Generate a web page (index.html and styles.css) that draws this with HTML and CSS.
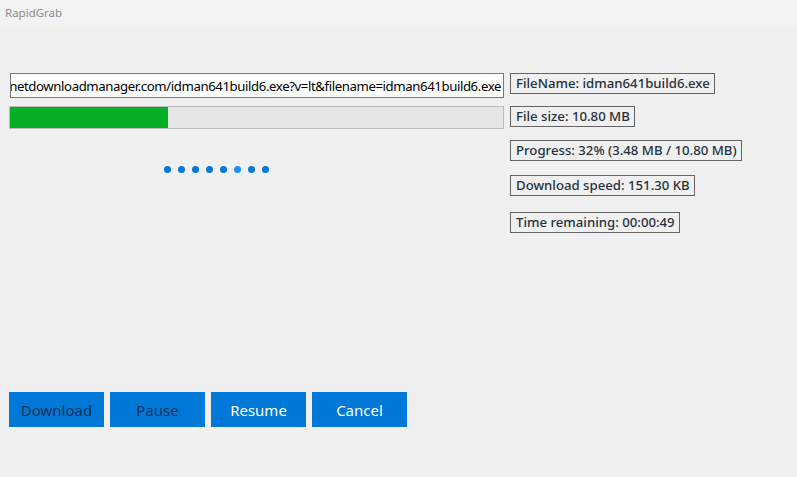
FILE: index.html
```html
<!DOCTYPE html>
<html>
<head>
<meta charset="utf-8">
<link rel="stylesheet" href="styles.css">
</head>
<body>
<div class="window">
  <div class="titlebar">RapidGrab</div>
  <div class="content">
    <div class="top">
      <div class="left">
        <div class="urlbox"><span class="url">netdownloadmanager.com/idman641build6.exe?v=lt&amp;filename=idman641build6.exe</span></div>
        <div class="progress"><div class="fill" style="width: 32%"></div></div>
        <div class="dots">
          <span class="dot"></span><span class="dot"></span><span class="dot"></span><span class="dot"></span><span class="dot"></span><span class="dot lit"></span><span class="dot"></span><span class="dot"></span>
        </div>
      </div>
      <div class="right">
        <div class="info">FileName: idman641build6.exe</div>
        <div class="info">File size: 10.80 MB</div>
        <div class="info">Progress: 32% (3.48 MB / 10.80 MB)</div>
        <div class="info">Download speed: 151.30 KB</div>
        <div class="info">Time remaining: 00:00:49</div>
      </div>
    </div>
    <div class="buttons">
      <button class="btn disabled">Download</button>
      <button class="btn disabled">Pause</button>
      <button class="btn">Resume</button>
      <button class="btn">Cancel</button>
    </div>
  </div>
</div>
</body>
</html>
```

FILE: styles.css
```css
html, body {
  margin: 0;
  padding: 0;
  background: #f0f0f0;
  font-family: "Noto Sans", "Open Sans", sans-serif;
}
.window {
  width: 797px;
  height: 477px;
  background: #f0f0f0;
  overflow: hidden;
}
.titlebar {
  height: 28px;
  background: #f3f3f3;
  color: #8a8a8a;
  font-size: 11.5px;
  line-height: 25px;
  padding-left: 5px;
}
.content {
  padding: 0 9px;
}
.top {
  display: flex;
  gap: 6px;
  height: 364px;
}
.left {
  width: 495px;
  display: flex;
  flex-direction: column;
}
.urlbox {
  margin: 45px 0 0 1px;
  box-sizing: border-box;
  width: 494px;
  height: 25px;
  background: #fff;
  border: 1px solid #7a7a7a;
  display: flex;
  justify-content: flex-end;
  align-items: center;
  overflow: hidden;
  padding-right: 2px;
}
.url {
  white-space: nowrap;
  font-size: 13.2px;
  letter-spacing: -0.4px;
  color: #000;
}
.progress {
  margin-top: 8px;
  box-sizing: border-box;
  height: 23px;
  background: #e6e6e6;
  border: 1px solid #bcbcbc;
}
.fill {
  height: 100%;
  background: #06b025;
}
.dots {
  margin: 37px 0 0 155px;
  display: flex;
  gap: 7px;
}
.dot {
  width: 7px;
  height: 7px;
  border-radius: 50%;
  background: #0078d7;
}
.dot.lit {
  background: #1e90ff;
}
.right {
  display: flex;
  flex-direction: column;
  align-items: flex-start;
  padding-top: 45px;
}
.info {
  box-sizing: border-box;
  height: 21px;
  border: 1px solid #646464;
  padding: 0 4px 0 5px;
  font-size: 13.2px;
  font-weight: 500;
  line-height: 19px;
  color: #26323c;
  white-space: nowrap;
}
.info:nth-child(2) { margin-top: 12px; }
.info:nth-child(3) { margin-top: 13px; }
.info:nth-child(4) { margin-top: 14px; }
.info:nth-child(5) { margin-top: 16px; }
.buttons {
  display: flex;
  gap: 6px;
}
.btn {
  width: 95px;
  height: 35px;
  border: none;
  margin: 0;
  padding: 0;
  background: #0078d7;
  color: #fff;
  font-family: "Noto Sans", "Open Sans", sans-serif;
  font-size: 15px;
}
.btn.disabled {
  color: #0f3359;
}
```
